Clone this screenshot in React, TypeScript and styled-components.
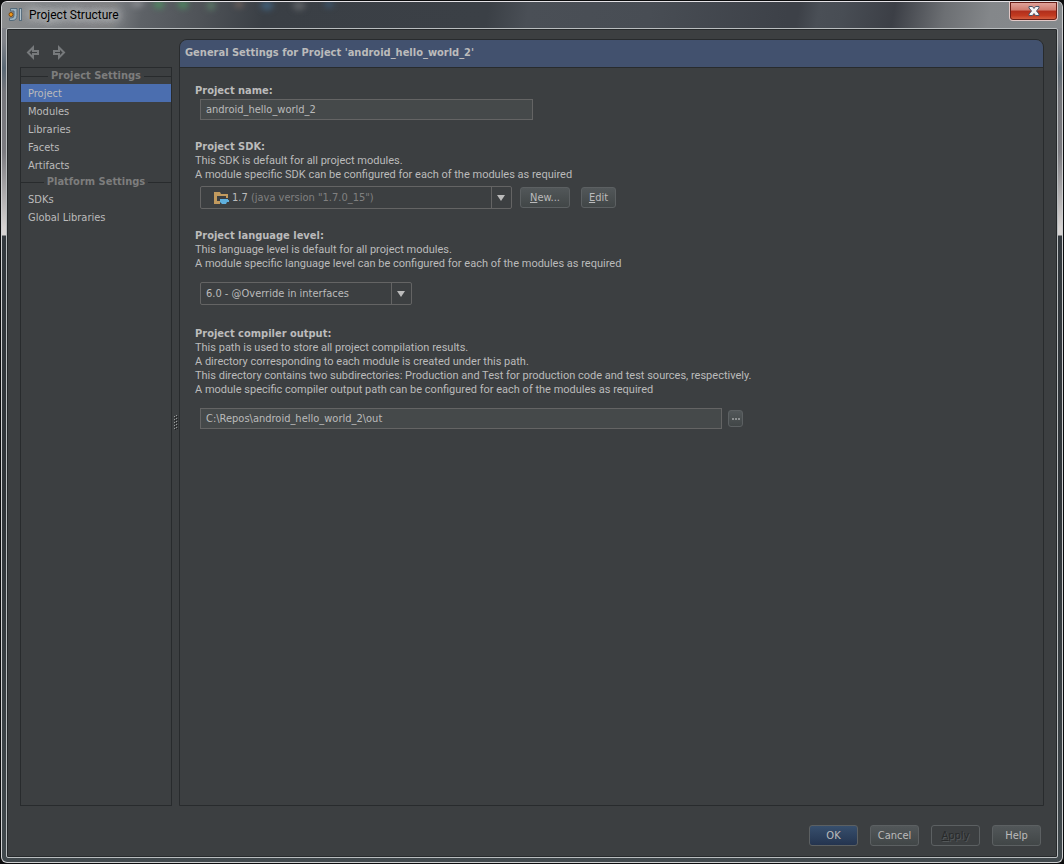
import React from "react";
import styled, { createGlobalStyle } from "styled-components";

const color = {
  panel: "#3c3f41",
  line: "#282b2d",
  text: "#bbbbbb",
  muted: "#7d7d7d",
  field: "#45494a",
  fieldBorder: "#646464",
  selection: "#4b6eaf",
  header: "#42516e",
};

const GlobalStyle = createGlobalStyle`
  *, *::before, *::after { box-sizing: border-box; }
  body {
    margin: 0;
    background: #0c0d0e;
    color: ${color.text};
    font: 11px/14px "DejaVu Sans Condensed", Tahoma, sans-serif;
  }
  button, input, select { font: inherit; color: inherit; }
`;

const Desktop = styled.div`
  display: flex;
  min-height: 100vh;
  padding: 1px;
`;

const Frame = styled.div`
  flex: 1;
  min-width: 0;
  display: flex;
  flex-direction: column;
  overflow: hidden;
  border: 1px solid #d0d1d3;
  border-top-color: #e4e2e6;
  border-radius: 6px;
  background: linear-gradient(
    #85878c 0, #7f8288 40px, #5a6874 66px, #75767b 90px, #7b7b80 150px,
    #d6d3d2 226px, #d6d3d2 233px, #33393e 234px, #2f3438 500px, #41494d 100%
  );
`;

const TitleBar = styled.header`
  position: relative;
  flex: none;
  display: flex;
  align-items: flex-start;
  height: 26px;
  padding-left: 6px;
  overflow: hidden;
  background: linear-gradient(
    100deg,
    #8d8f90 0, #85888b 30px, #7b7e82 110px, #5e6267 140px, #4e5257 200px, #3a3f45 260px,
    #3b4046 480px, #4a4f56 520px, #484d54 640px, #3d4148 776px, #3d4148 786px,
    #4a4f56 806px, #484d54 830px, #3c3f46 880px, #6c6f73 930px, #84878a 975px, #868a8d 100%
  );
`;

const Reflections = styled.svg`
  position: absolute;
  top: 0;
  left: 130px;
  width: 220px;
  height: 26px;
  filter: blur(3px);
`;

const AppIcon = styled.svg`
  position: relative;
  flex: none;
  width: 16px;
  height: 16px;
  margin-top: 5px;
`;

const Title = styled.h1`
  position: relative;
  flex: 1;
  margin: 4px 0 0 5px;
  color: #000;
  font: 400 12px/18px Roboto, "Segoe UI", sans-serif;
  text-shadow: 0 0 8px #c2c4c6, 0 0 8px #c2c4c6, 0 0 12px #c2c4c6, 0 0 14px #b2b4b6;
`;

const CloseButton = styled.button`
  display: flex;
  justify-content: center;
  align-items: center;
  width: 49px;
  height: 19px;
  margin-right: 4px;
  padding: 0 0 1px;
  border: 1px solid #e2c8c6;
  border-top: 0;
  border-radius: 0 0 4px 4px;
  background: linear-gradient(#e2a79f 0, #cf7a6d 45%, #b02e1c 50%, #c23a20 75%, #d9694a 100%);
  box-shadow: inset 0 0 0 1px #6a1f18;
`;

const Client = styled.div`
  flex: 1;
  display: flex;
  flex-direction: column;
  margin: 0 4px 4px;
  padding: 10px 13px 11px;
  border: 1px solid #b9bdbf;
  border-radius: 2px;
  background: ${color.panel};
  box-shadow: inset 0 0 0 1px #26292b;
`;

const Workspace = styled.div`
  flex: 1;
  display: grid;
  grid-template-columns: 152px 7px minmax(0, 1fr);
`;

const Sidebar = styled.aside`
  display: flex;
  flex-direction: column;
`;

const History = styled.div`
  display: flex;
  gap: 10px;
  height: 28px;
  padding: 5px 5px 0;
`;

const HistoryButton = styled.button`
  width: 16px;
  height: 16px;
  padding: 0;
  border: 0;
  background: none;
`;

const Nav = styled.nav`
  flex: 1;
  border: 1px solid ${color.line};
`;

const Separator = styled.h2`
  display: flex;
  align-items: center;
  gap: 3px;
  height: 16px;
  margin: 0;
  color: ${color.muted};
  font-size: 11px;
  line-height: 16px;
  white-space: nowrap;

  &::before, &::after {
    content: "";
    flex: 1;
    height: 1px;
    background: ${color.line};
  }
`;

const NavItem = styled.a<{ $selected?: boolean }>`
  display: block;
  padding: 2px 7px 0;
  line-height: 16px;
  color: inherit;
  text-decoration: none;
  background: ${(p) => (p.$selected ? color.selection : "transparent")};
`;

const Splitter = styled.div`
  display: flex;
  justify-content: center;
  align-items: center;
`;

const Content = styled.main`
  display: flex;
  flex-direction: column;
  border: 1px solid ${color.line};
  border-radius: 8px 8px 0 0;
`;

const ContentHeader = styled.h2`
  height: 28px;
  margin: 0;
  padding: 0 5px;
  border-bottom: 1px solid ${color.line};
  border-radius: 7px 7px 0 0;
  background: ${color.header};
  font-size: 11px;
  line-height: 26px;
`;

const Form = styled.form`
  padding: 16px 15px;
`;

const Section = styled.section<{ $space?: number }>`
  display: flex;
  flex-direction: column;
  align-items: flex-start;
  margin-top: ${(p) => p.$space ?? 0}px;
`;

const Label = styled.label`
  font-weight: 700;
`;

const Hint = styled.p`
  margin: 0;
  font-family: Roboto, Tahoma, sans-serif;
`;

const Controls = styled.div<{ $gap: number }>`
  display: flex;
  align-items: center;
  align-self: stretch;
  margin-top: ${(p) => p.$gap}px;
  padding-left: 5px;
`;

const TextField = styled.input<{ $width: number }>`
  flex: 0 1 ${(p) => p.$width}px;
  min-width: 0;
  height: 21px;
  padding: 0 5px;
  border: 1px solid ${color.fieldBorder};
  border-radius: 0;
  background: ${color.field};
  outline: none;
`;

const Combo = styled.div<{ $width: number }>`
  display: grid;
  grid-template-columns: minmax(0, 1fr) 20px;
  flex: 0 1 ${(p) => p.$width}px;
  height: 23px;
  border: 1px solid ${color.fieldBorder};
  border-radius: 2px;
`;

const ComboSelect = styled.select<{ $covered?: boolean }>`
  grid-row: 1;
  grid-column: 1 / 3;
  z-index: 1;
  width: 100%;
  height: 21px;
  padding: 0 25px 0 5px;
  appearance: none;
  border: 0;
  background: none;
  outline: none;
  opacity: ${(p) => (p.$covered ? 0 : 1)};

  option { background: ${color.panel}; }
`;

const ComboFace = styled.span`
  grid-row: 1;
  grid-column: 1;
  display: flex;
  align-items: center;
  gap: 3px;
  padding-left: 12px;
  white-space: pre;
`;

const Faded = styled.span`
  color: #808080;
`;

const ComboArrow = styled.span`
  grid-row: 1;
  grid-column: 2;
  display: flex;
  justify-content: center;
  align-items: center;
  border-left: 1px solid ${color.fieldBorder};
`;

const Button = styled.button<{ $width?: number; $primary?: boolean }>`
  flex: none;
  width: ${(p) => p.$width ?? 49}px;
  height: 21px;
  padding: 0;
  border: 1px solid #5c6062;
  border-radius: 3px;
  background: ${(p) =>
    p.$primary
      ? "linear-gradient(#374f6d, #24344f)"
      : "linear-gradient(#525759, #414647)"};
  line-height: 14px;
  white-space: nowrap;

  &:disabled {
    background: none;
    color: #282a2b;
    text-shadow: 1px 1px 0 #54585a;
  }
`;

const NewButton = styled(Button)`
  margin: 0 11px 0 8px;
`;

const BrowseButton = styled(Button)`
  display: flex;
  justify-content: center;
  align-items: center;
  height: 17px;
  margin-left: 6px;
`;

const Footer = styled.footer`
  display: flex;
  justify-content: flex-end;
  gap: 12px;
  padding: 19px 3px 0 0;
`;

const Glow = () => (
  <Reflections viewBox="0 0 220 26" aria-hidden="true">
    <ellipse cx="5" cy="0" rx="8" ry="4" fill="#a0a2a6" />
    <ellipse cx="27" cy="1" rx="5" ry="5" fill="#4c9a62" />
    <ellipse cx="51" cy="1" rx="5" ry="5" fill="#4c9a62" />
    <ellipse cx="79" cy="3" rx="4" ry="5" fill="#5c8069" />
    <ellipse cx="107" cy="1" rx="4" ry="4" fill="#806c62" />
    <ellipse cx="135" cy="3" rx="6" ry="5" fill="#416480" />
    <ellipse cx="167" cy="3" rx="6" ry="5" fill="#63666a" />
    <ellipse cx="197" cy="1" rx="4" ry="4" fill="#3c6080" />
  </Reflections>
);

const LogoIcon = () => (
  <AppIcon viewBox="0 0 16 16" aria-hidden="true">
    <path
      d="M2.500 1.500h6.500v7q0 5-5 5H1.500v-2.500h2q2.500 0 2.500-2.500V4H2.500z"
      fill="#9db4c2"
      stroke="#546b7b"
    />
    <rect x="11.500" y="1.500" width="2" height="12" fill="#b4c6d0" stroke="#546b7b" />
    <circle cx="3" cy="7.500" r="2" fill="#f09a1c" stroke="#7a4a14" />
  </AppIcon>
);

const ArrowIcon = ({ back }: { back?: boolean }) => (
  <svg width="16" height="16" viewBox="0 0 16 16" aria-hidden="true">
    <path
      d={back ? "M3 8.500L8 3.500V7h5v3H8v3.500z" : "M13 8.500L8 3.500V7H3v3h5v3.500z"}
      fill="none"
      stroke="#777a7c"
      strokeWidth="2"
    />
  </svg>
);

const SdkIcon = () => (
  <svg width="16" height="16" viewBox="0 0 16 16" aria-hidden="true">
    <path d="M1 2h6l1 2h7v4h-2V6H4v5h3v3H1z" fill="#c29a5e" />
    <path d="M7 9h8v1h1v2h-2l-1 2H9l-2-2z" fill="#5fb0de" />
  </svg>
);

const DownArrow = () => (
  <ComboArrow>
    <svg width="9" height="6" viewBox="0 0 9 6" aria-hidden="true">
      <path d="M0 0h8L4 6z" fill="#bbbbbb" />
    </svg>
  </ComboArrow>
);

const gripRows = [0, 3, 6, 9, 12];

export default function App() {
  return (
    <Desktop>
      <GlobalStyle />
      <Frame>
        <TitleBar>
          <Glow />
          <LogoIcon />
          <Title>Project Structure</Title>
          <CloseButton type="button" aria-label="Close">
            <svg width="12" height="10" viewBox="0 0 12 10" aria-hidden="true">
              <path
                d="M1 .5h3.500L6 2.500 7.500 .5H11V2L8.500 5 11 8v1.500H7.500L6 7.500 4.500 9.500H1V8l2.500-3L1 2z"
                fill="#f4f4f4"
                stroke="#4a5468"
              />
            </svg>
          </CloseButton>
        </TitleBar>

        <Client>
          <Workspace>
            <Sidebar>
              <History>
                <HistoryButton type="button" aria-label="Back">
                  <ArrowIcon back />
                </HistoryButton>
                <HistoryButton type="button" aria-label="Forward">
                  <ArrowIcon />
                </HistoryButton>
              </History>
              <Nav>
                <Separator>Project Settings</Separator>
                <NavItem href="#project" $selected aria-current="page">Project</NavItem>
                <NavItem href="#modules">Modules</NavItem>
                <NavItem href="#libraries">Libraries</NavItem>
                <NavItem href="#facets">Facets</NavItem>
                <NavItem href="#artifacts">Artifacts</NavItem>
                <Separator>Platform Settings</Separator>
                <NavItem href="#sdks">SDKs</NavItem>
                <NavItem href="#global-libraries">Global Libraries</NavItem>
              </Nav>
            </Sidebar>

            <Splitter>
              <svg width="5" height="15" viewBox="0 0 5 15" aria-hidden="true">
                {gripRows.map((y) => (
                  <g key={y}>
                    <path d={`M1 ${y + 1}h1v1H1zM3 ${y}h1v1H3z`} fill="#9a9c9d" />
                    <path d={`M2 ${y + 2}h1v1H2zM4 ${y + 1}h1v1H4z`} fill="#1d1f20" />
                  </g>
                ))}
              </svg>
            </Splitter>

            <Content>
              <ContentHeader>General Settings for Project 'android_hello_world_2'</ContentHeader>
              <Form onSubmit={(e) => e.preventDefault()}>
                <Section>
                  <Label htmlFor="name">Project name:</Label>
                  <Controls $gap={1}>
                    <TextField id="name" $width={333} defaultValue="android_hello_world_2" />
                  </Controls>
                </Section>

                <Section $space={20}>
                  <Label htmlFor="sdk">Project SDK:</Label>
                  <Hint>This SDK is default for all project modules.</Hint>
                  <Hint>A module specific SDK can be configured for each of the modules as required</Hint>
                  <Controls $gap={4}>
                    <Combo $width={312}>
                      <ComboFace aria-hidden="true">
                        <SdkIcon />
                        <span>1.7 <Faded>(java version "1.7.0_15")</Faded></span>
                      </ComboFace>
                      <DownArrow />
                      <ComboSelect id="sdk" $covered>
                        <option>1.7 (java version "1.7.0_15")</option>
                      </ComboSelect>
                    </Combo>
                    <NewButton type="button" $width={50}><u>N</u>ew...</NewButton>
                    <Button type="button" $width={35}><u>E</u>dit</Button>
                  </Controls>
                </Section>

                <Section $space={20}>
                  <Label htmlFor="level">Project language level:</Label>
                  <Hint>This language level is default for all project modules.</Hint>
                  <Hint>A module specific language level can be configured for each of the modules as required</Hint>
                  <Controls $gap={11}>
                    <Combo $width={212}>
                      <ComboSelect id="level">
                        <option>6.0 - @Override in interfaces</option>
                      </ComboSelect>
                      <DownArrow />
                    </Combo>
                  </Controls>
                </Section>

                <Section $space={22}>
                  <Label htmlFor="output">Project compiler output:</Label>
                  <Hint>This path is used to store all project compilation results.</Hint>
                  <Hint>A directory corresponding to each module is created under this path.</Hint>
                  <Hint>This directory contains two subdirectories: Production and Test for production code and test sources, respectively.</Hint>
                  <Hint>A module specific compiler output path can be configured for each of the modules as required</Hint>
                  <Controls $gap={11}>
                    <TextField id="output" $width={522} defaultValue="C:\Repos\android_hello_world_2\out" />
                    <BrowseButton type="button" $width={15} aria-label="Browse">
                      <svg width="8" height="2" viewBox="0 0 8 2" aria-hidden="true">
                        <path d="M0 0h2v2H0zM3 0h2v2H3zM6 0h2v2H6z" fill="#8c8f90" />
                      </svg>
                    </BrowseButton>
                  </Controls>
                </Section>
              </Form>
            </Content>
          </Workspace>

          <Footer>
            <Button type="button" $primary>OK</Button>
            <Button type="button">Cancel</Button>
            <Button type="button" disabled><u>A</u>pply</Button>
            <Button type="button">Help</Button>
          </Footer>
        </Client>
      </Frame>
    </Desktop>
  );
}
